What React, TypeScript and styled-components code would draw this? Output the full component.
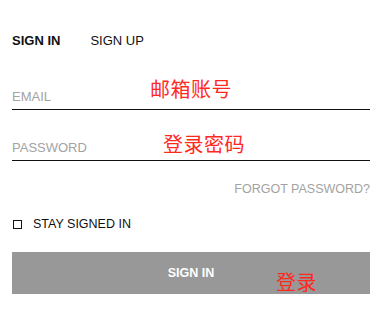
import React, { useState } from "react";
import styled, { createGlobalStyle, css } from "styled-components";

const GlobalStyle = createGlobalStyle`
  html, body {
    margin: 0;
    padding: 0;
    background: #fff;
  }
  body {
    font-family: "Liberation Sans", Arial, sans-serif;
    color: #111;
  }
`;

const Page = styled.div`
  width: 383px;
  box-sizing: border-box;
  padding: 32px 13px 0 12px;
  display: flex;
  flex-direction: column;
`;

const Tabs = styled.div`
  display: flex;
  gap: 30px;
  height: 18px;
  align-items: center;
`;

const Tab = styled.span<{ active?: boolean }>`
  font-size: 13px;
  line-height: 18px;
  color: #111;
  cursor: pointer;
  ${(p) =>
    p.active &&
    css`
      font-weight: bold;
    `}
`;

const Field = styled.label<{ gap: number }>`
  position: relative;
  display: block;
  margin-top: ${(p) => p.gap}px;
  padding-bottom: 4px;
  border-bottom: 1px solid #111;
`;

const Input = styled.input`
  display: block;
  width: 100%;
  border: 0;
  outline: none;
  padding: 0;
  height: 18px;
  font-family: inherit;
  font-size: 13px;
  background: transparent;
  &::placeholder {
    color: #a3a3a3;
  }
`;

const Note = styled.span<{ top: number; left: number }>`
  position: absolute;
  top: ${(p) => p.top}px;
  left: ${(p) => p.left}px;
  font-family: "Noto Sans CJK SC", sans-serif;
  font-size: 20px;
  font-weight: normal;
  line-height: 22px;
  letter-spacing: 0.5px;
  color: #ff2a1f;
  pointer-events: none;
  white-space: nowrap;
`;

const Forgot = styled.a`
  align-self: flex-end;
  margin-top: 19px;
  font-size: 12.5px;
  line-height: 18px;
  color: #a3a3a3;
  text-decoration: none;
  cursor: pointer;
`;

const Remember = styled.label`
  display: flex;
  align-items: center;
  margin-top: 17px;
  height: 18px;
  gap: 11px;
  font-size: 12.5px;
  color: #111;
  cursor: pointer;
`;

const Box = styled.span<{ checked: boolean }>`
  width: 7px;
  height: 7px;
  margin-left: 1px;
  border: 1px solid #111;
  background: ${(p) => (p.checked ? "#111" : "#fff")};
`;

const Submit = styled.button`
  position: relative;
  margin-top: 19px;
  height: 42px;
  width: 100%;
  border: 0;
  background: #989898;
  color: #fff;
  font-family: inherit;
  font-size: 12.5px;
  font-weight: bold;
  cursor: pointer;
`;

export default function App() {
  const [stay, setStay] = useState(false);

  return (
    <>
      <GlobalStyle />
      <Page>
        <Tabs>
          <Tab active>SIGN IN</Tab>
          <Tab>SIGN UP</Tab>
        </Tabs>

        <Field gap={37}>
          <Input type="email" placeholder="EMAIL" />
          <Note top={-9} left={138}>邮箱账号</Note>
        </Field>

        <Field gap={28}>
          <Input type="password" placeholder="PASSWORD" />
          <Note top={-5} left={151}>登录密码</Note>
        </Field>

        <Forgot>FORGOT PASSWORD?</Forgot>

        <Remember onClick={() => setStay(!stay)}>
          <Box checked={stay} />
          STAY SIGNED IN
        </Remember>

        <Submit>
          SIGN IN
          <Note top={19} left={264}>登录</Note>
        </Submit>
      </Page>
    </>
  );
}
